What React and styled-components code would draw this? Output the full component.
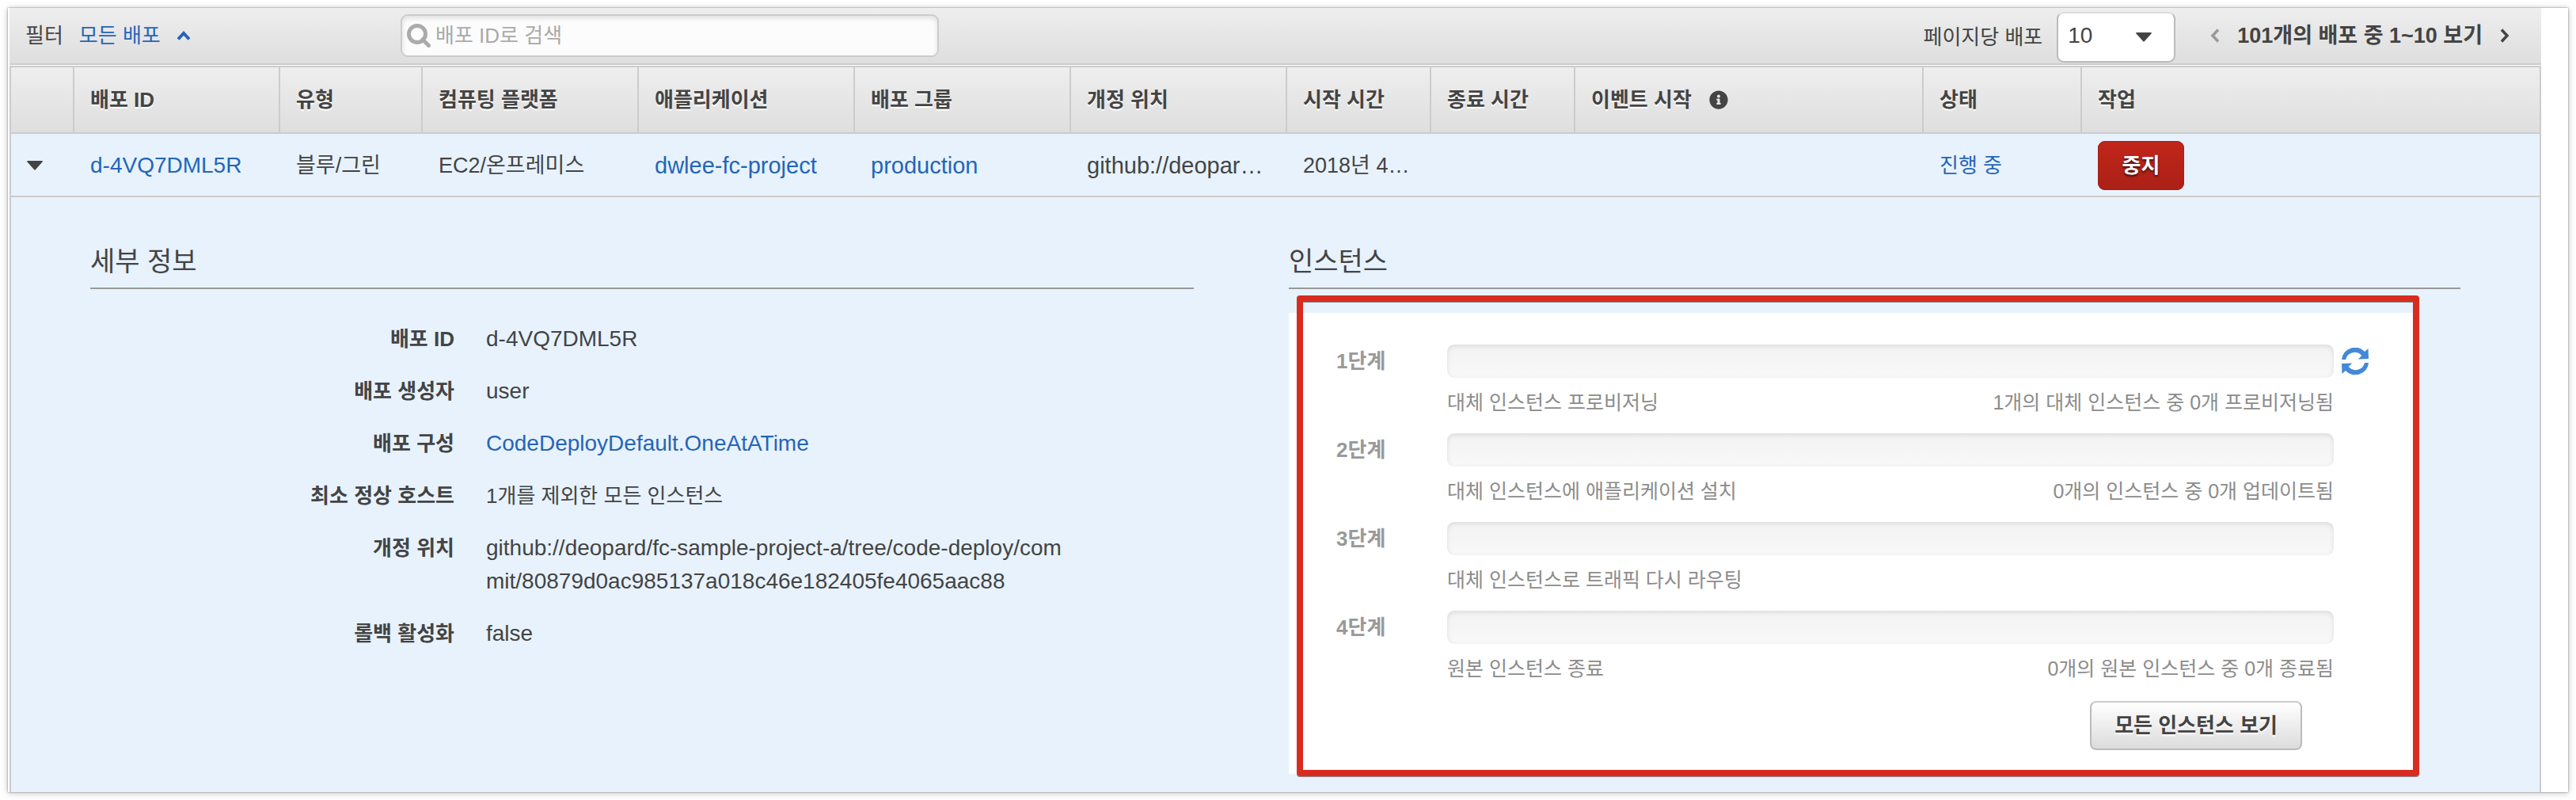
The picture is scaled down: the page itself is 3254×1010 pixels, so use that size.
import React from "react";
import styled, { createGlobalStyle, css } from "styled-components";
import { FaInfoCircle } from "react-icons/fa";

const GlobalStyle = createGlobalStyle`
  * { box-sizing: border-box; }
  body {
    margin: 0;
    background: #fff;
    color: #444;
    font-family: "Liberation Sans", "Noto Sans CJK KR", sans-serif;
    font-size: 26px;
    line-height: 42px;
  }
  button, input, select { font: inherit; color: inherit; }
`;

const greyFade = css`
  background: linear-gradient(#eeeeee, #dedede);
`;

const Page = styled.div`
  padding: 10px;
`;

const Window = styled.main`
  padding: 0 34px 0 2px;
  background: #fff;
  box-shadow: 0 0 2px rgba(0, 0, 0, 0.45), 0 1px 8px rgba(0, 0, 0, 0.25);
`;

const Toolbar = styled.header`
  ${greyFade}
  display: flex;
  align-items: center;
  height: 72px;
  margin-bottom: 1px;
  padding-right: 40px;
  border-bottom: 2px solid #ccc;
`;

const FilterGroup = styled.div`
  display: flex;
  align-items: center;
  gap: 20px;
  width: 494px;
  padding-left: 20px;
`;

const PlainButton = styled.button`
  display: flex;
  align-items: center;
  gap: 20px;
  padding: 0;
  border: 0;
  background: none;
  color: ${(p) => p.$color || "#444"};
  cursor: pointer;
`;

const SearchBox = styled.label`
  display: flex;
  align-items: center;
  gap: 6px;
  width: 680px;
  height: 54px;
  padding: 0 6px;
  border: 2px solid #ccc;
  border-radius: 9px;
  background: #fcfcfc;
  box-shadow: inset 0 3px 6px rgba(0, 0, 0, 0.12);
`;

const SearchInput = styled.input`
  flex: 1;
  min-width: 0;
  height: 48px;
  padding: 0;
  border: 0;
  outline: 0;
  background: none;
  &::placeholder { color: #aaa; opacity: 1; }
`;

const PageSize = styled.div`
  display: flex;
  align-items: center;
  gap: 18px;
  margin-left: auto;
  padding-top: 4px;
`;

const SelectWrap = styled.div`
  display: grid;
  align-items: center;
  width: 150px;
  & > * { grid-area: 1 / 1; }
  & > svg { justify-self: end; margin-right: 30px; pointer-events: none; }
`;

const Select = styled.select`
  appearance: none;
  width: 100%;
  height: 64px;
  padding: 0 12px 4px;
  border: 2px solid #bbb;
  border-top-color: #ddd;
  border-radius: 9px;
  background: #fff;
  font-size: 28px;
`;

const Pager = styled.nav`
  display: flex;
  align-items: center;
  gap: 22px;
  margin-left: 44px;
  font-size: 27px;
  font-weight: 700;
`;

const Table = styled.table`
  width: 100%;
  table-layout: fixed;
  border-collapse: separate;
  border-spacing: 0;
  border: 2px solid #ccc;
  border-bottom: 0;
`;

const HeadRow = styled.tr`
  ${greyFade}
`;

const Th = styled.th`
  height: 84px;
  padding: 0 18px 0 20px;
  border-right: 2px solid #ccc;
  border-bottom: 2px solid #ccc;
  text-align: left;
  text-shadow: 0 2px 0 #fff;
  white-space: nowrap;
  &:last-child { border-right: 0; }
`;

const HeadLabel = styled.span`
  display: flex;
  align-items: center;
  gap: 22px;
`;

const BodyRow = styled.tr`
  background: #e7f2fd;
`;

const Td = styled.td`
  height: 80px;
  padding: 2px 0 0 20px;
  border-bottom: 2px solid #ccc;
  font-size: ${(p) => p.$size || 28}px;
  white-space: nowrap;
`;

const Link = styled.a`
  color: #2565b8;
  text-decoration: none;
`;

const StopButton = styled.button`
  display: block;
  width: 109px;
  height: 62px;
  padding: 0;
  border: 0;
  border-radius: 9px;
  background: linear-gradient(#c1261a, #ab2017);
  box-shadow: inset 0 0 1px 1px #a92017;
  color: #fff;
  font-size: 26px;
  font-weight: 700;
  text-shadow: 0 2px 3px rgba(0, 0, 0, 0.7);
`;

const DetailCell = styled.td`
  padding: 0;
`;

const Details = styled.div`
  display: grid;
  grid-template-columns: 1394fr 1480fr;
  gap: 120px;
  padding: 56px 100px 23px;
`;

const SectionTitle = styled.h2`
  height: 60px;
  margin: 0;
  border-bottom: 2px solid #999;
  font-size: 34px;
  font-weight: 400;
  line-height: 50px;
`;

const Fields = styled.dl`
  display: grid;
  gap: 24px;
  margin: 0;
  padding-top: 42px;
`;

const Field = styled.div`
  display: grid;
  grid-template-columns: 460px minmax(0, 740px);
  gap: 40px;
`;

const FieldName = styled.dt`
  font-weight: 700;
  text-align: right;
`;

const FieldValue = styled.dd`
  margin: 0;
  font-size: ${(p) => p.$size || 28}px;
  word-break: break-all;
`;

const Panel = styled.div`
  position: relative;
  margin: 30px 58px 0 0;
  padding: 40px 58px 30px 60px;
  background: #fff;
  color: #999;
`;

const Highlight = styled.div`
  position: absolute;
  inset: -22px -6px -3px 10px;
  border: 8px solid #d82c20;
  border-radius: 4px;
  box-shadow: 0 1px 0 #888, inset 0 1px 0 #888;
  pointer-events: none;
`;

const Steps = styled.ol`
  display: grid;
  gap: 22px;
  margin: 0;
  padding: 0;
  list-style: none;
`;

const Step = styled.li`
  display: grid;
  grid-template-columns: 130px 1fr 34px;
  column-gap: 10px;
  row-gap: 12px;
  align-items: center;
`;

const StepName = styled.span`
  font-weight: 700;
`;

const Bar = styled.div`
  height: 42px;
  border-radius: 9px;
  background: linear-gradient(#f3f3f3, #f8f8f8);
  box-shadow: inset 0 2px 6px rgba(0, 0, 0, 0.1);
`;

const Caption = styled.div`
  grid-column: 2;
  display: flex;
  justify-content: space-between;
  height: 36px;
  color: #8c8c8c;
  font-size: 25px;
  line-height: 38px;
`;

const ViewAllButton = styled.button`
  display: block;
  height: 62px;
  margin: 24px 84px 0 auto;
  padding: 0 29px;
  border: 2px solid #bbb;
  border-top-color: #ccc;
  border-radius: 8px;
  background: linear-gradient(#fff, #dcdcdc);
  color: #444;
  font-weight: 700;
  text-shadow: 0 2px 2px #fff;
`;

const Triangle = () => (
  <svg width="20" height="12" viewBox="0 0 20 12" aria-hidden="true">
    <path d="M1 0h18q1.500 0 .5 1.500L11 11q-1 1.200-2 0L.5 1.500Q-.5 0 1 0z" fill="#444" />
  </svg>
);

const CaretUp = () => (
  <svg width="18" height="12" viewBox="0 0 18 12" aria-hidden="true">
    <path d="M2 10.500 9 3l7 7.500" fill="none" stroke="#2565b8" strokeWidth="4" />
  </svg>
);

const Chevron = ({ left, color }) => (
  <svg width="12" height="18" viewBox="0 0 12 18" aria-hidden="true">
    <path d={left ? "M10 1.500 3 9l7 7.500" : "M2 1.500 9 9l-7 7.500"} fill="none" stroke={color} strokeWidth="3.500" />
  </svg>
);

const SearchIcon = () => (
  <svg width="30" height="30" viewBox="0 0 30 30" aria-hidden="true">
    <circle cx="13" cy="13" r="10.500" fill="none" stroke="#aaa" strokeWidth="5" />
    <path d="m20 20 7.500 7.500" stroke="#aaa" strokeWidth="5" strokeLinecap="round" />
  </svg>
);

const refreshArrow = "M0 15.500A17.500 17.500 0 0 1 30 5.200L34.500 1 35 14.500 21.500 15 26 10.200A12 12 0 0 0 5.200 15.500Z";

const RefreshIcon = () => (
  <svg width="34" height="34" viewBox="0 0 35 35" fill="currentColor" aria-hidden="true">
    <path d={refreshArrow} />
    <path d={refreshArrow} transform="rotate(180 17.500 17.500)" />
  </svg>
);

const columns = [
  { width: 80, label: "" },
  { width: 260, label: "배포 ID" },
  { width: 180, label: "유형" },
  { width: 273, label: "컴퓨팅 플랫폼" },
  { width: 273, label: "애플리케이션" },
  { width: 273, label: "배포 그룹" },
  { width: 273, label: "개정 위치" },
  { width: 182, label: "시작 시간" },
  { width: 182, label: "종료 시간" },
  { width: 440, label: "이벤트 시작", info: true },
  { width: 200, label: "상태" },
  { label: "작업" },
];

const fields = [
  { name: "배포 ID", value: "d-4VQ7DML5R" },
  { name: "배포 생성자", value: "user" },
  { name: "배포 구성", value: "CodeDeployDefault.OneAtATime", link: true },
  { name: "최소 정상 호스트", value: "1개를 제외한 모든 인스턴스", size: 26 },
  {
    name: "개정 위치",
    value: "github://deopard/fc-sample-project-a/tree/code-deploy/commit/80879d0ac985137a018c46e182405fe4065aac88",
  },
  { name: "롤백 활성화", value: "false" },
];

const steps = [
  { name: "1단계", text: "대체 인스턴스 프로비저닝", status: "1개의 대체 인스턴스 중 0개 프로비저닝됨", refresh: true },
  { name: "2단계", text: "대체 인스턴스에 애플리케이션 설치", status: "0개의 인스턴스 중 0개 업데이트됨" },
  { name: "3단계", text: "대체 인스턴스로 트래픽 다시 라우팅" },
  { name: "4단계", text: "원본 인스턴스 종료", status: "0개의 원본 인스턴스 중 0개 종료됨" },
];

export default function App() {
  return (
    <Page>
      <GlobalStyle />
      <Window>
        <Toolbar>
          <FilterGroup>
            <span>필터</span>
            <PlainButton type="button" $color="#2565b8">
              모든 배포
              <CaretUp />
            </PlainButton>
          </FilterGroup>
          <SearchBox>
            <SearchIcon />
            <SearchInput type="text" placeholder="배포 ID로 검색" aria-label="배포 ID로 검색" />
          </SearchBox>
          <PageSize>
            <label htmlFor="page-size">페이지당 배포</label>
            <SelectWrap>
              <Select id="page-size" defaultValue="10">
                <option>10</option>
              </Select>
              <Triangle />
            </SelectWrap>
          </PageSize>
          <Pager>
            <PlainButton type="button" aria-label="이전">
              <Chevron left color="#999" />
            </PlainButton>
            <span>101개의 배포 중 1~10 보기</span>
            <PlainButton type="button" aria-label="다음">
              <Chevron color="#444" />
            </PlainButton>
          </Pager>
        </Toolbar>

        <Table>
          <colgroup>
            {columns.map((c, i) => (
              <col key={i} width={c.width} />
            ))}
          </colgroup>
          <thead>
            <HeadRow>
              {columns.map((c, i) => (
                <Th key={i} scope="col">
                  <HeadLabel>
                    {c.label}
                    {c.info && <FaInfoCircle size={24} />}
                  </HeadLabel>
                </Th>
              ))}
            </HeadRow>
          </thead>
          <tbody>
            <BodyRow>
              <Td>
                <PlainButton type="button" aria-label="접기">
                  <Triangle />
                </PlainButton>
              </Td>
              <Td><Link href="#deployment">d-4VQ7DML5R</Link></Td>
              <Td $size={27}>블루/그린</Td>
              <Td $size={27}>EC2/온프레미스</Td>
              <Td $size={29}><Link href="#application">dwlee-fc-project</Link></Td>
              <Td $size={29}><Link href="#group">production</Link></Td>
              <Td $size={29}>github://deopar…</Td>
              <Td $size={27}>2018년 4…</Td>
              <Td />
              <Td />
              <Td $size={26}><Link href="#status">진행 중</Link></Td>
              <Td><StopButton type="button">중지</StopButton></Td>
            </BodyRow>
            <BodyRow>
              <DetailCell colSpan={columns.length}>
                <Details>
                  <section>
                    <SectionTitle>세부 정보</SectionTitle>
                    <Fields>
                      {fields.map((f) => (
                        <Field key={f.name}>
                          <FieldName>{f.name}</FieldName>
                          <FieldValue $size={f.size}>
                            {f.link ? <Link href="#config">{f.value}</Link> : f.value}
                          </FieldValue>
                        </Field>
                      ))}
                    </Fields>
                  </section>
                  <section>
                    <SectionTitle>인스턴스</SectionTitle>
                    <Panel>
                      <Steps>
                        {steps.map((s) => (
                          <Step key={s.name}>
                            <StepName>{s.name}</StepName>
                            <Bar role="progressbar" aria-label={s.name} aria-valuenow={0} />
                            {s.refresh && (
                              <PlainButton type="button" $color="#4289d8" aria-label="새로 고침">
                                <RefreshIcon />
                              </PlainButton>
                            )}
                            <Caption>
                              <span>{s.text}</span>
                              {s.status && <span>{s.status}</span>}
                            </Caption>
                          </Step>
                        ))}
                      </Steps>
                      <ViewAllButton type="button">모든 인스턴스 보기</ViewAllButton>
                      <Highlight />
                    </Panel>
                  </section>
                </Details>
              </DetailCell>
            </BodyRow>
          </tbody>
        </Table>
      </Window>
    </Page>
  );
}
